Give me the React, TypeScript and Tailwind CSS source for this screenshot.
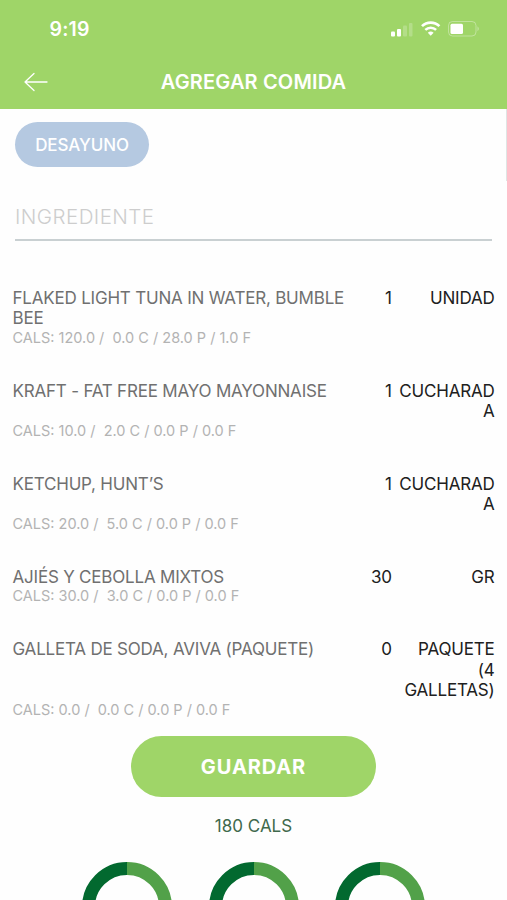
import React from "react";

type Item = { name: string; qty: string; unit: string[]; cals: string };

const items: Item[] = [
  { name: "FLAKED LIGHT TUNA IN WATER, BUMBLE BEE", qty: "1", unit: ["UNIDAD"], cals: "CALS: 120.0 /  0.0 C / 28.0 P / 1.0 F" },
  { name: "KRAFT - FAT FREE MAYO MAYONNAISE", qty: "1", unit: ["CUCHARAD", "A"], cals: "CALS: 10.0 /  2.0 C / 0.0 P / 0.0 F" },
  { name: "KETCHUP, HUNT’S", qty: "1", unit: ["CUCHARAD", "A"], cals: "CALS: 20.0 /  5.0 C / 0.0 P / 0.0 F" },
  { name: "AJIÉS Y CEBOLLA MIXTOS", qty: "30", unit: ["GR"], cals: "CALS: 30.0 /  3.0 C / 0.0 P / 0.0 F" },
  { name: "GALLETA DE SODA, AVIVA (PAQUETE)", qty: "0", unit: ["PAQUETE", "(4", "GALLETAS)"], cals: "CALS: 0.0 /  0.0 C / 0.0 P / 0.0 F" },
];

function StatusIcons() {
  return (
    <svg width="92" height="20" viewBox="0 0 92 20" fill="none">
      <rect x="2" y="11.5" width="4" height="5" rx="1" fill="#fff" />
      <rect x="8" y="9" width="4" height="7.5" rx="1" fill="#fff" />
      <rect x="14" y="5.5" width="4" height="11" rx="1" fill="#fff" fillOpacity=".22" />
      <rect x="20" y="3" width="3.5" height="13.5" rx="1" fill="#fff" fillOpacity=".22" />
      <path d="M33 6.1a12.5 12.5 0 0 1 17.4 0" stroke="#fff" strokeWidth="2.7" />
      <path d="M36.3 9.9a7.8 7.8 0 0 1 10.8 0" stroke="#fff" strokeWidth="2.5" />
      <path d="M38.8 12.7a4.3 4.3 0 0 1 5.8 0L41.7 15.8z" fill="#fff" />
      <rect x="59.5" y="1.5" width="27.5" height="14.5" rx="4" stroke="#fff" strokeOpacity=".35" />
      <rect x="61.5" y="3.7" width="12.5" height="10.3" rx="1.5" fill="#fff" />
      <path d="M88.5 6.3q2.6 2.4 0 4.9z" fill="#fff" fillOpacity=".4" />
    </svg>
  );
}

function Ring() {
  return (
    <svg width="90" height="90" viewBox="0 0 90 90" fill="none" strokeWidth="13" className="shrink-0">
      <path d="M45 6.5a38.5 38.5 0 0 1 0 77" stroke="#52a149" />
      <path d="M45 83.5a38.5 38.5 0 0 1 0-77" stroke="#02692f" />
    </svg>
  );
}

export default function App() {
  return (
    <div className="flex h-[900px] w-[507px] flex-col overflow-hidden bg-[#fefefe] font-['Inter',sans-serif]">
      <header className="h-[108.5px] shrink-0 bg-[#9fd568] text-white">
        <div className="flex h-[56px] items-center justify-between pt-[3px] pr-[26px] pl-[49.5px]">
          <span className="text-[19.5px] font-semibold tracking-[0.2px]">9:19</span>
          <StatusIcons />
        </div>
        <div className="grid h-[52px] grid-cols-[80px_1fr_80px] items-center">
          <svg width="26" height="20" viewBox="0 0 26 20" fill="none" stroke="#fff" strokeWidth="1.3" strokeLinecap="round" strokeLinejoin="round" className="ml-[23px]">
            <path d="M24 10H2M11 1.5 2 10l9 8.5" />
          </svg>
          <h1 className="text-center text-[20px] font-semibold tracking-[0.15px] whitespace-nowrap">AGREGAR COMIDA</h1>
        </div>
      </header>
      <main className="flex grow flex-col">
        <div className="flex h-[74px] shrink-0 justify-between pt-[13.5px] pl-[15px]">
          <button className="h-[45px] w-[134px] rounded-full bg-[#b5c9e1] pt-[2px] text-[17px] font-medium tracking-[-0.1px] text-white">DESAYUNO</button>
          <div className="-mt-[13.5px] h-[72px] w-px bg-[#dfe5e4]" />
        </div>
        <div className="mx-[15px] flex h-[58.5px] shrink-0 items-center border-b-2 border-[#c9d0d2] pt-[13px]">
          <span className="text-[20.5px] font-light tracking-[0.45px] text-[#cdcdcd]">INGREDIENTE</span>
        </div>
        <ul className="mt-[46.6px] flex shrink-0 flex-col gap-[34px] pr-[12.5px] pl-[12.5px]">
          {items.map((item) => (
            <li key={item.name}>
              <div className="flex text-[17px] leading-[20.7px] tracking-[-0.2px] text-[#202020]">
                <div className="w-[344px] text-[#707070]">{item.name}</div>
                <div className="w-[35.3px] text-right">{item.qty}</div>
                <div className="flex grow flex-col items-end">
                  {item.unit.map((line) => (
                    <span key={line}>{line}</span>
                  ))}
                </div>
              </div>
              <div className="text-[14.5px] leading-[17.6px] whitespace-pre text-[#b3b3b3]">{item.cals}</div>
            </li>
          ))}
        </ul>
        <button className="mt-[17.3px] h-[61px] w-[245px] shrink-0 self-center rounded-full bg-[#9fd568] pt-[2px] text-[20px] font-bold tracking-[0.9px] text-white">GUARDAR</button>
        <p className="mt-[17px] shrink-0 text-center text-[17px] leading-[24px] text-[#40694c]">180 CALS</p>
        <div className="mt-[24px] flex shrink-0 justify-center gap-[36.7px]">
          <Ring />
          <Ring />
          <Ring />
        </div>
      </main>
    </div>
  );
}
